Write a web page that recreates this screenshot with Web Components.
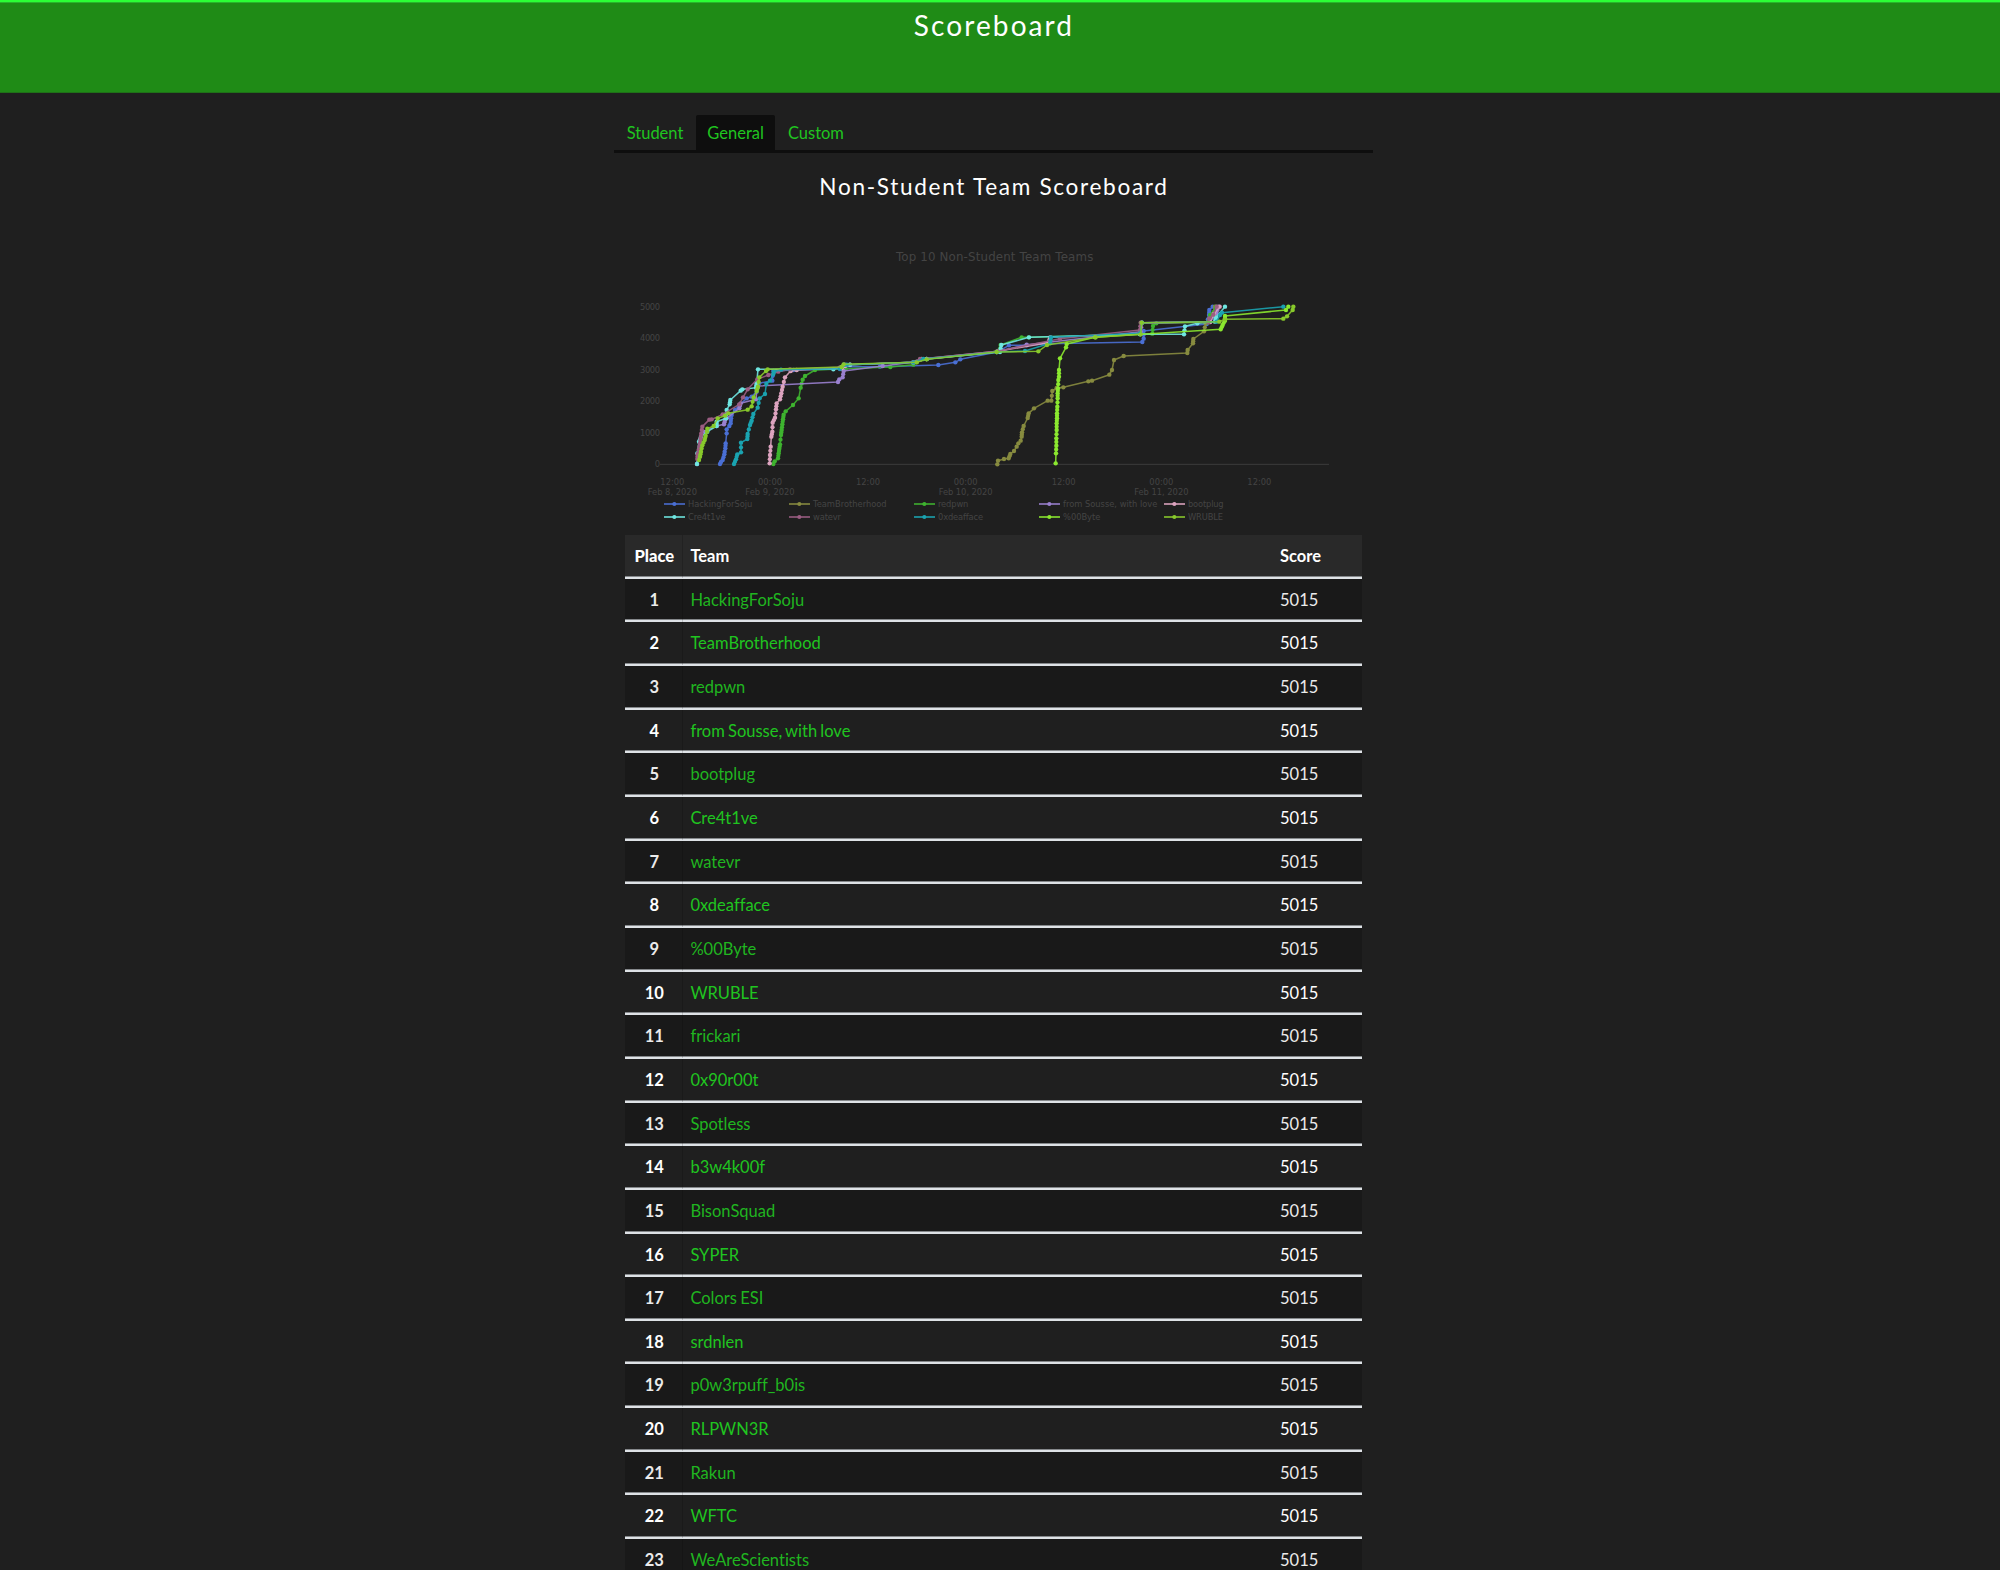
<!DOCTYPE html>
<html lang="en">
<head>
<meta charset="utf-8">
<title>Scoreboard</title>
<style>
html,body{margin:0;background:#1f1f1f;overflow:hidden;height:1570px}
body{font-family:Lato,sans-serif;font-size:16.5px;color:#fff;font-variant-ligatures:none}
</style>
</head>
<body>
<score-page></score-page>
<script>
const define=(name,render)=>customElements.define(name,class extends HTMLElement{
  connectedCallback(){
    if(!this.shadowRoot)this.attachShadow({mode:'open'}).innerHTML=render(this);
  }
});

define('site-header',()=>`<style>
:host{display:block;box-sizing:border-box;height:93px;border-top:2px solid #2bff35;background:#1f8b16;box-shadow:inset 0 1px #27b62a,inset 0 -1px #1f7118;text-align:center;padding-right:14px}
h1{margin:0;padding-top:8px;font-weight:400;font-size:28px;line-height:30px;letter-spacing:2.1px;text-indent:2px}
</style><h1><slot></slot></h1>`);

define('tab-item',()=>`<style>
:host{display:block;box-sizing:border-box;height:35px;line-height:37px;padding:0 11px;border-radius:2px 2px 0 0;color:#20c520}
:host([active]){background:#0e0e0e}
</style><slot></slot>`);

define('tab-bar',()=>`<style>
:host{display:flex;gap:2px;height:35px;border-bottom:3px solid #0e0e0e;padding-left:1.7px}
</style><slot></slot>`);

const SERIES=[
['HackingForSoju','#4a6fd4','300,522 303,516 308,510 313,493 314,485 316,475 317,460 320,430 320,418 328,408 332,400 333,385 335,375 345,360 358,345 380,325 395,320 410,305 417,280 457,272 460,243 520,240 660,237 672,230 780,230 955,225 1006,217 1021,208 1132,186 1167,166 1220,166 1280,161 1567,156 1571,146 1571,123 1760,102 1767,75 1768,60 1778,50'],
['TeamBrotherhood','#878b3f','1132,523 1134,512 1152,507 1166,505 1171,492 1182,483 1190,470 1195,460 1202,452 1205,440 1206,427 1211,408 1223,384 1226,370 1242,355 1283,332 1294,332 1297,303 1310,294 1330,292 1405,274 1416,272 1468,254 1476,240 1482,210 1511,198 1702,189 1703,180 1719,160 1720,147 1752,124 1757,100 1775,75 1785,50'],
['redpwn','#3eb32f','460,522 464,514 474,505 476,490 478,476 480,463 483,435 485,420 487,403 489,388 491,374 497,364 519,345 536,325 542,293 548,269 555,258 585,240 677,236 811,231 880,224 890,216 920,207 1130,186 1142,165 1205,142 1226,142 1597,131 1599,108 1609,100 1765,97 1770,75 1788,50'],
['from Sousse, with love','#9a80cf','231,522 236,490 240,455 250,425 290,408 312,403 315,390 320,385 358,355 362,340 408,328 412,288 654,276 658,268 668,262 671,243 788,228 890,215 920,207 1130,186 1220,164 1562,125 1565,98 1770,96 1790,70 1795,50'],
['bootplug','#dda3bf','449,520 450,495 452,470 454,440 457,425 458,398 465,383 468,358 470,340 480,328 484,310 488,290 495,262 512,243 530,240 665,235 675,228 690,224 880,217 905,207 1132,184 1285,158 1291,142 1561,132 1566,98 1770,96 1782,72 1799,50'],
['Cre4t1ve','#6fe6e1','231,522 232,490 237,455 243,440 262,425 290,408 290,395 318,385 320,360 329,343 331,330 362,302 367,298 408,293 410,280 414,238 640,238 672,224 690,224 880,217 920,207 1140,186 1144,165 1227,142 1560,133 1692,133 1695,109 1732,100 1785,95 1788,82 1815,50'],
['watevr','#9b5d82','232,507 233,492 236,480 240,460 242,445 244,430 247,410 268,389 275,388 308,373 358,343 369,322 383,298 412,268 445,255 475,245 510,238 660,232 675,224 880,217 900,207 1132,184 1320,146 1560,120 1562,98 1765,97 1768,85 1780,74 1790,50'],
['0xdeafface','#1aa3b0','342,522 348,508 352,493 363,487 363,458 382,447 383,432 390,405 395,392 400,372 413,353 419,325 435,312 439,282 450,272 460,252 462,245 483,239 660,236 680,224 880,217 910,207 1130,186 1215,183 1290,160 1293,142 1560,130 1566,98 1790,95 1800,75 1806,68 1990,50'],
['%00Byte','#8be82f','1307,520 1308,490 1309,467 1309,445 1310,420 1310,400 1311,385 1311,370 1312,350 1313,325 1313,310 1314,295 1315,270 1317,260 1317,240 1320,205 1338,172 1340,162 1425,142 1802,118 1808,105 1815,92 1815,78 1998,60 2005,50'],
['WRUBLE','#88c92b','237,510 240,500 243,485 247,466 254,450 257,437 261,425 262,416 281,408 293,385 315,377 325,370 383,359 395,349 401,322 410,303 414,290 418,262 438,243 443,238 665,231 671,223 890,217 920,208 1130,186 1255,184 1281,165 1427,142 1562,133 1565,98 1798,95 1815,88 1990,86 2001,79 2018,60 2020,50']];

function trace([,color,path]){
  const pts=path.split(' ').map(p=>p.split(',').map(Number));
  let dots='';
  pts.forEach(([x,y],i)=>{
    dots+=`<circle cx="${x}" cy="${y}" r="6.6"/>`;
    const n=pts[i+1];
    if(n){
      const dx=n[0]-x,dy=y-n[1];
      if(dx<8&&dy>12&&dy<30)dots+=`<circle cx="${x+dx/2}" cy="${y-dy/2}" r="6.4"/>`;
    }
  });
  return `<polyline points="${path}" fill="none" stroke="${color}" stroke-opacity=".9" stroke-width="4.6" stroke-linejoin="round"/><g fill="${color}">${dots}</g>`;
}
const label=(s,x,y,w,anchor='start',size=25)=>`<text x="${x}" y="${y}" textLength="${w}" text-anchor="${anchor}" font-size="${size}">${s}</text>`;

define('score-chart',()=>{
  const legendW=[193,221,91,283,107,112,84,135,112,105];
  let g='';
  g+=label('Top 10 Non-Student Team Teams',1124,-88,592,'middle',35.5);
  [[0,530,15],[1000,437,60],[2000,342,60],[3000,248,60],[4000,153,60],[5000,59,60]].forEach(([v,y,w])=>g+=label(v,120,y,w,'end'));
  [157,450,744,1037,1331,1624,1918].forEach((x,i)=>g+=label(i%2?'00:00':'12:00',x,585,72,'middle'));
  [[157,'Feb 8, 2020',148],[450,'Feb 9, 2020',148],[1037,'Feb 10, 2020',162],[1624,'Feb 11, 2020',163]].forEach(([x,s,w])=>g+=label(s,x,615,w,'middle'));
  let keys='';
  SERIES.forEach(([name,c],i)=>{
    const x=132+(i%5)*375,y=i<5?642:681;
    keys+=`<path d="M${x} ${y}h63" stroke="${c}" stroke-width="5.5" stroke-opacity=".85"/><circle cx="${x+31}" cy="${y}" r="6.2" fill="${c}"/>`;
    g+=label(name,x+72,y+9,legendW[i]);
  });
  return `<style>:host{display:block}svg{display:block;width:740px;height:300px}text{font-family:"DejaVu Sans",sans-serif;fill:#444}</style>
<svg viewBox="15 -165 2220 900"><path d="M120 523H2127" stroke="#3b3b3b" stroke-width="3"/>${SERIES.map(trace).join('')}${keys}${g}</svg>`;
});

define('score-row',el=>`<style>
:host{display:grid;grid-template-columns:58px 1fr 88px;box-sizing:border-box;height:43.66px;border-bottom:2px solid #dee2e6;box-shadow:inset 0 -1px #85888b;line-height:43px;background:#1f1f1f}
:host([odd]){background:#191919}
:host([head]){background:#292929;font-weight:700}
b{text-align:center;border-right:1px solid #00000026;padding-left:1.5px}
.team{padding-left:7.4px;color:#20b520;word-spacing:-1px}
.score{padding-left:6px}
:host([even]) .team{color:#20c520}
:host([head]) .team{color:inherit}
:host([odd]) b,:host([odd]) .score{color:#ebebeb}
</style><b>${el.getAttribute('place')}</b><span class="team"><slot></slot></span><span class="score">${el.getAttribute('score')}</span>`);

const TEAMS=['HackingForSoju','TeamBrotherhood','redpwn','from Sousse, with love','bootplug','Cre4t1ve','watevr','0xdeafface','%00Byte','WRUBLE','frickari','0x90r00t','Spotless','b3w4k00f','BisonSquad','SYPER','Colors ESI','srdnlen','p0w3rpuff_b0is','RLPWN3R','Rakun','WFTC','WeAreScientists'];

define('score-table',()=>`<style>:host{display:block;width:737px}</style>
<score-row head place="Place" score="Score">Team</score-row>
${TEAMS.map((t,i)=>`<score-row ${i%2?'even':'odd'} place="${i+1}" score="5015">${t}</score-row>`).join('')}`);

define('score-page',()=>`<style>
:host{display:block}
main{width:759px;margin:22px 0 0 614px}
h2{margin:0;padding-top:21px;height:82px;box-sizing:border-box;text-align:center;font-weight:400;font-size:22.6px;line-height:26px;letter-spacing:1.68px;text-indent:1px}
section{padding-left:11px}
</style>
<site-header>Scoreboard</site-header>
<main>
<tab-bar><tab-item>Student</tab-item><tab-item active>General</tab-item><tab-item>Custom</tab-item></tab-bar>
<h2>Non-Student Team Scoreboard</h2>
<section><score-chart></score-chart><score-table></score-table></section>
</main>`);
</script>
</body>
</html>
